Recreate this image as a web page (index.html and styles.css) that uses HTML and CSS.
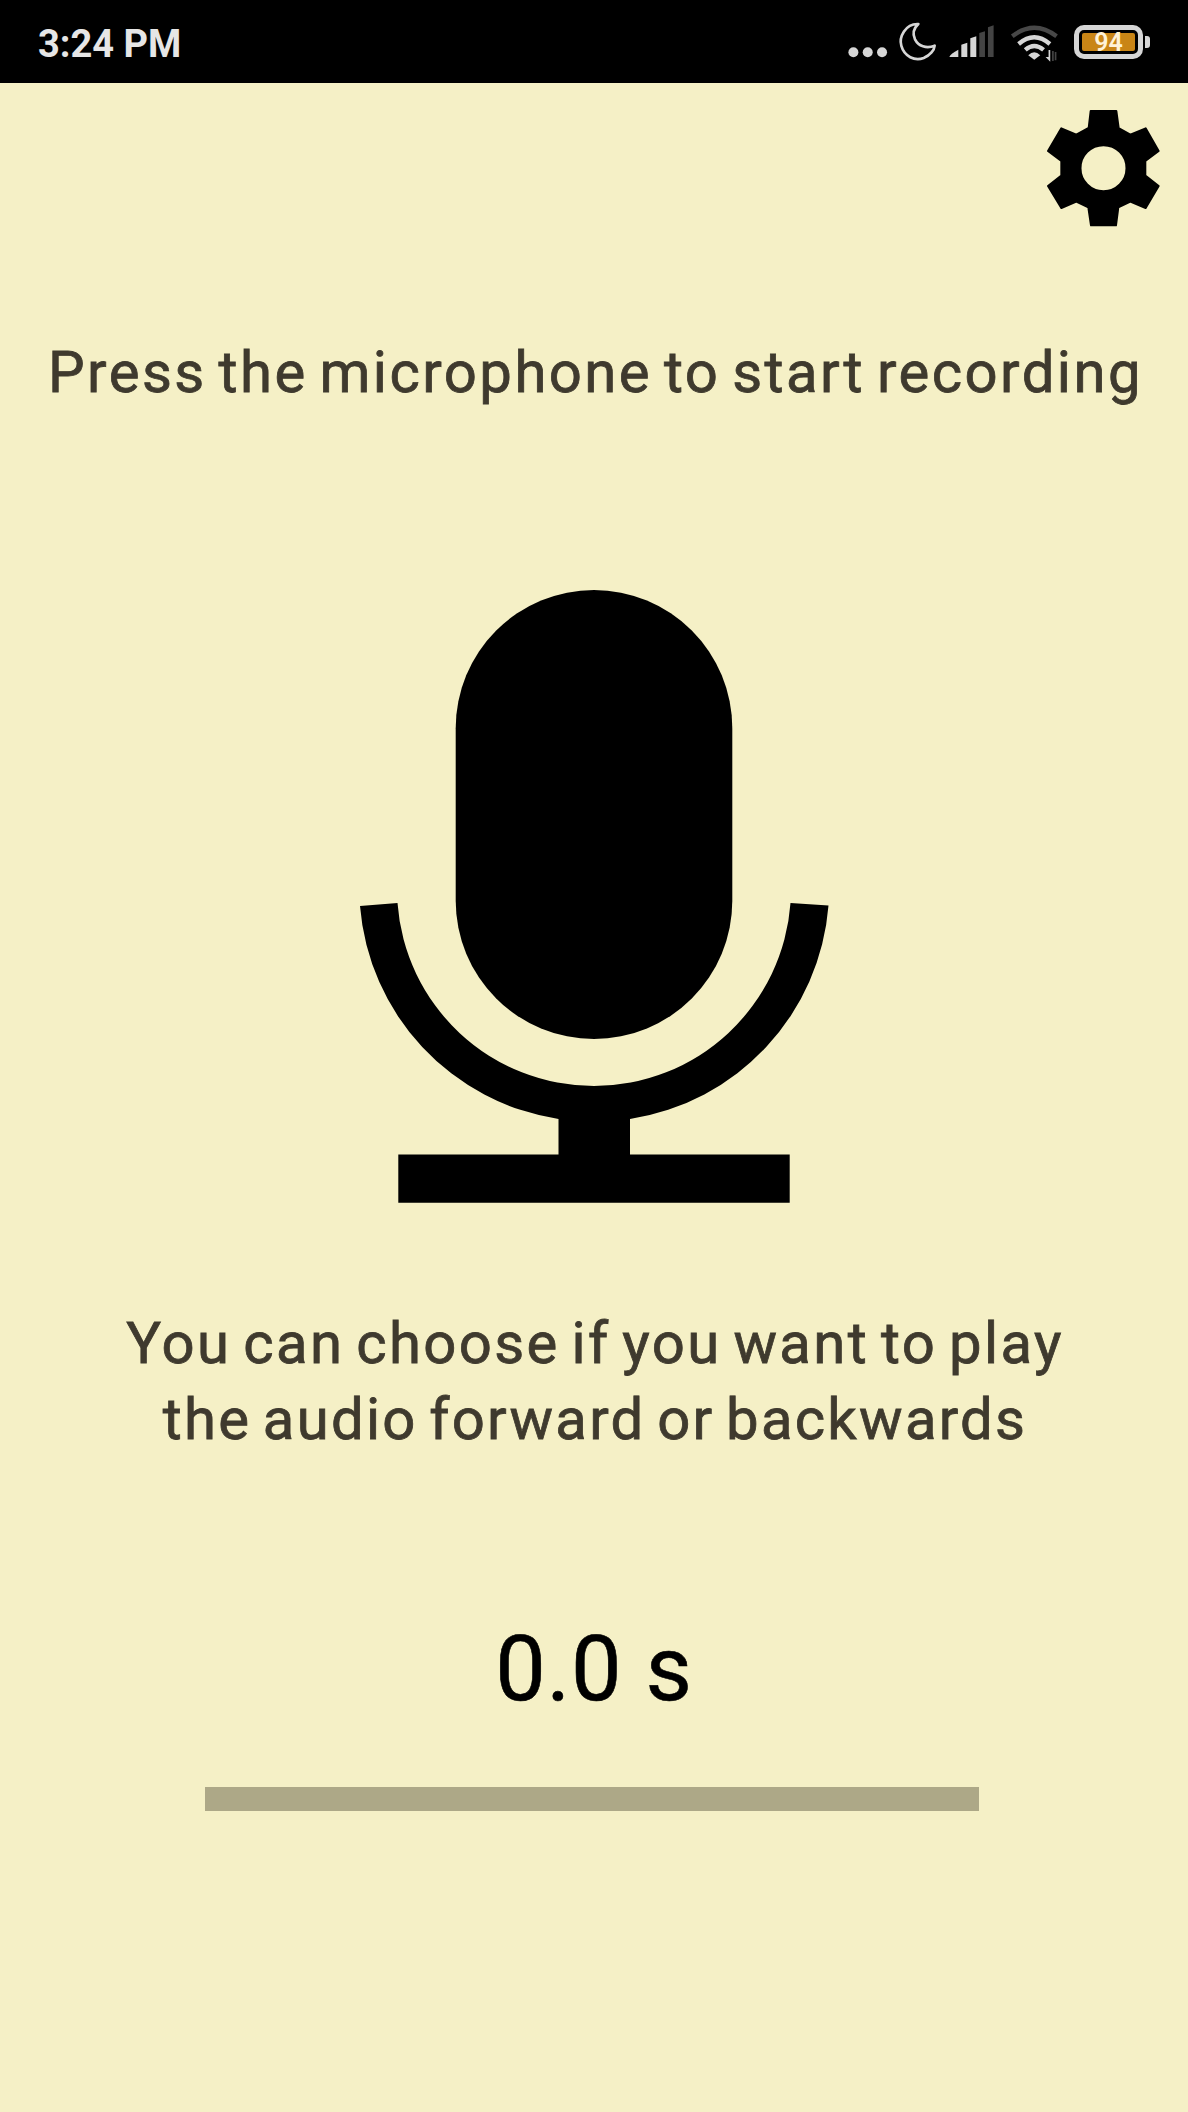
FILE: index.html
```html
<!DOCTYPE html>
<html lang="en">
<head>
<meta charset="utf-8">
<title>Voice recorder</title>
<link rel="stylesheet" href="styles.css">
</head>
<body>
<header class="status">
  <time class="clock">3:24 PM</time>
  <div class="indicators">
    <svg class="signals" viewBox="50 60 640 130" aria-hidden="true">
      <g fill="#d6d6d6">
        <circle cx="69" cy="157" r="15"/><circle cx="112" cy="157" r="15"/><circle cx="155" cy="157" r="15"/>
        <path d="M357 171Q361 161 384 149V171Z"/>
        <path d="M393 134L411 128V171H393ZM420 115L438 109V171H420Z"/>
        <path d="M594 166Q612 148 630 166L612 179Z"/>
        <path d="M660 150V185L646 171H655V150Z"/>
      </g>
      <path d="M264 72C225 70 205 112 213 138C222 170 253 184 280 174C300 166 312 150 313 137C288 148 264 138 254 118C246 101 251 84 264 72Z" fill="none" stroke="#d6d6d6" stroke-width="8" stroke-linejoin="round"/>
      <path d="M447 99L464 94V171H447ZM473 82L490 76V171H473Z" fill="#444"/>
      <g fill="none" stroke-width="13">
        <path d="M546 109Q612 58 679 109" stroke="#484848"/>
        <path d="M565 132Q612 92 659 132M585 150Q612 126 640 150" stroke="#d6d6d6"/>
      </g>
      <path d="M668 153V183M676 156V181" stroke="#444" stroke-width="5"/>
    </svg>
    <div class="battery"><span class="charge">94</span></div>
    <i class="terminal"></i>
  </div>
</header>
<main class="screen">
  <button class="settings" aria-label="Settings">
    <svg viewBox="78 57 345 355" aria-hidden="true">
      <path fill="#000" stroke="#000" stroke-width="6" stroke-linejoin="round" fill-rule="evenodd" d="M212 63H289L296 114L331 134L377 115L416 183L376 213V257L416 288L377 354L331 335L295 352L288 406H213L205 352L169 335L124 354L84 288L124 257V213L84 183L124 115L169 134L206 114ZM181.500 234.500A69 69 0 1 0 319.500 234.500A69 69 0 1 0 181.500 234.500Z"/>
    </svg>
  </button>
  <h1 class="prompt">Press the microphone to start recording</h1>
  <button class="record" aria-label="Record">
    <svg viewBox="360 589 469 615" aria-hidden="true">
      <rect x="455.700" y="590" width="276.600" height="449" rx="138.300"/>
      <path d="M360 906L397.500 903A197 197 0 0 0 790.500 903L828.500 905.500A234.700 234.700 0 0 1 630 1119V1154.500H789.700V1202.700H398.300V1154.500H558.500V1119A234.700 234.700 0 0 1 360 906Z"/>
    </svg>
  </button>
  <p class="hint"><span class="hint-first">You can choose if you want to play</span><span class="hint-second">the audio forward or backwards</span></p>
  <output class="timer">0.0 s</output>
  <div class="progress"></div>
</main>
</body>
</html>
```
FILE: styles.css
```css
* { box-sizing: border-box; }
body {
  margin: 0;
  min-height: 2112px;
  background: #f5f0c6;
  font-family: Roboto, "Liberation Sans", sans-serif;
}
button { border: 0; padding: 0; background: none; }
svg { display: block; }
.status {
  display: flex;
  align-items: center;
  justify-content: space-between;
  height: 83px;
  padding: 1px 38px 0;
  background: #000;
}
.clock { color: #e6e6e6; font-size: 38px; font-weight: 700; line-height: 44px; padding-top: 3px; }
.indicators { display: flex; align-items: center; }
.signals { width: 213.300px; height: 43.300px; }
.battery {
  display: flex;
  width: 69px;
  height: 34px;
  margin-left: 14px;
  padding: 3px;
  border: 5px solid #d6d6d6;
  border-radius: 10px;
}
.charge {
  flex: 1;
  border-radius: 2px;
  background: #c98516;
  color: #fff3d8;
  font-size: 25px;
  font-weight: 600;
  line-height: 20px;
  text-align: center;
}
.terminal { width: 5px; height: 12px; margin-left: 2px; border-radius: 0 3px 3px 0; background: #d6d6d6; }
.screen { display: flex; flex-direction: column; align-items: center; padding-top: 26px; }
.settings { align-self: flex-end; width: 115px; height: 118.300px; margin-right: 27px; }
.prompt,
.hint {
  color: #3f3a2e;
  font-size: 58px;
  font-weight: 400;
  white-space: nowrap;
  word-spacing: -5px;
  -webkit-text-stroke: 0.8px currentColor;
}
.prompt { margin: 109.700px 0 0 3px; line-height: 70px; letter-spacing: 2.470px; }
.record { width: 469px; height: 615px; margin-top: 182px; }
.hint {
  display: flex;
  flex-direction: column;
  align-items: center;
  margin: 101px 0 0 2px;
  line-height: 76px;
  letter-spacing: 2.400px;
}
.hint-second { letter-spacing: 2.270px; }
.timer {
  margin-top: 160px;
  font-size: 90px;
  line-height: 106px;
  letter-spacing: 0.800px;
  -webkit-text-stroke: 0.600px currentColor;
}
.progress { width: 774px; height: 24px; margin: 64px 4px 0 0; background: #ada887; }
```
